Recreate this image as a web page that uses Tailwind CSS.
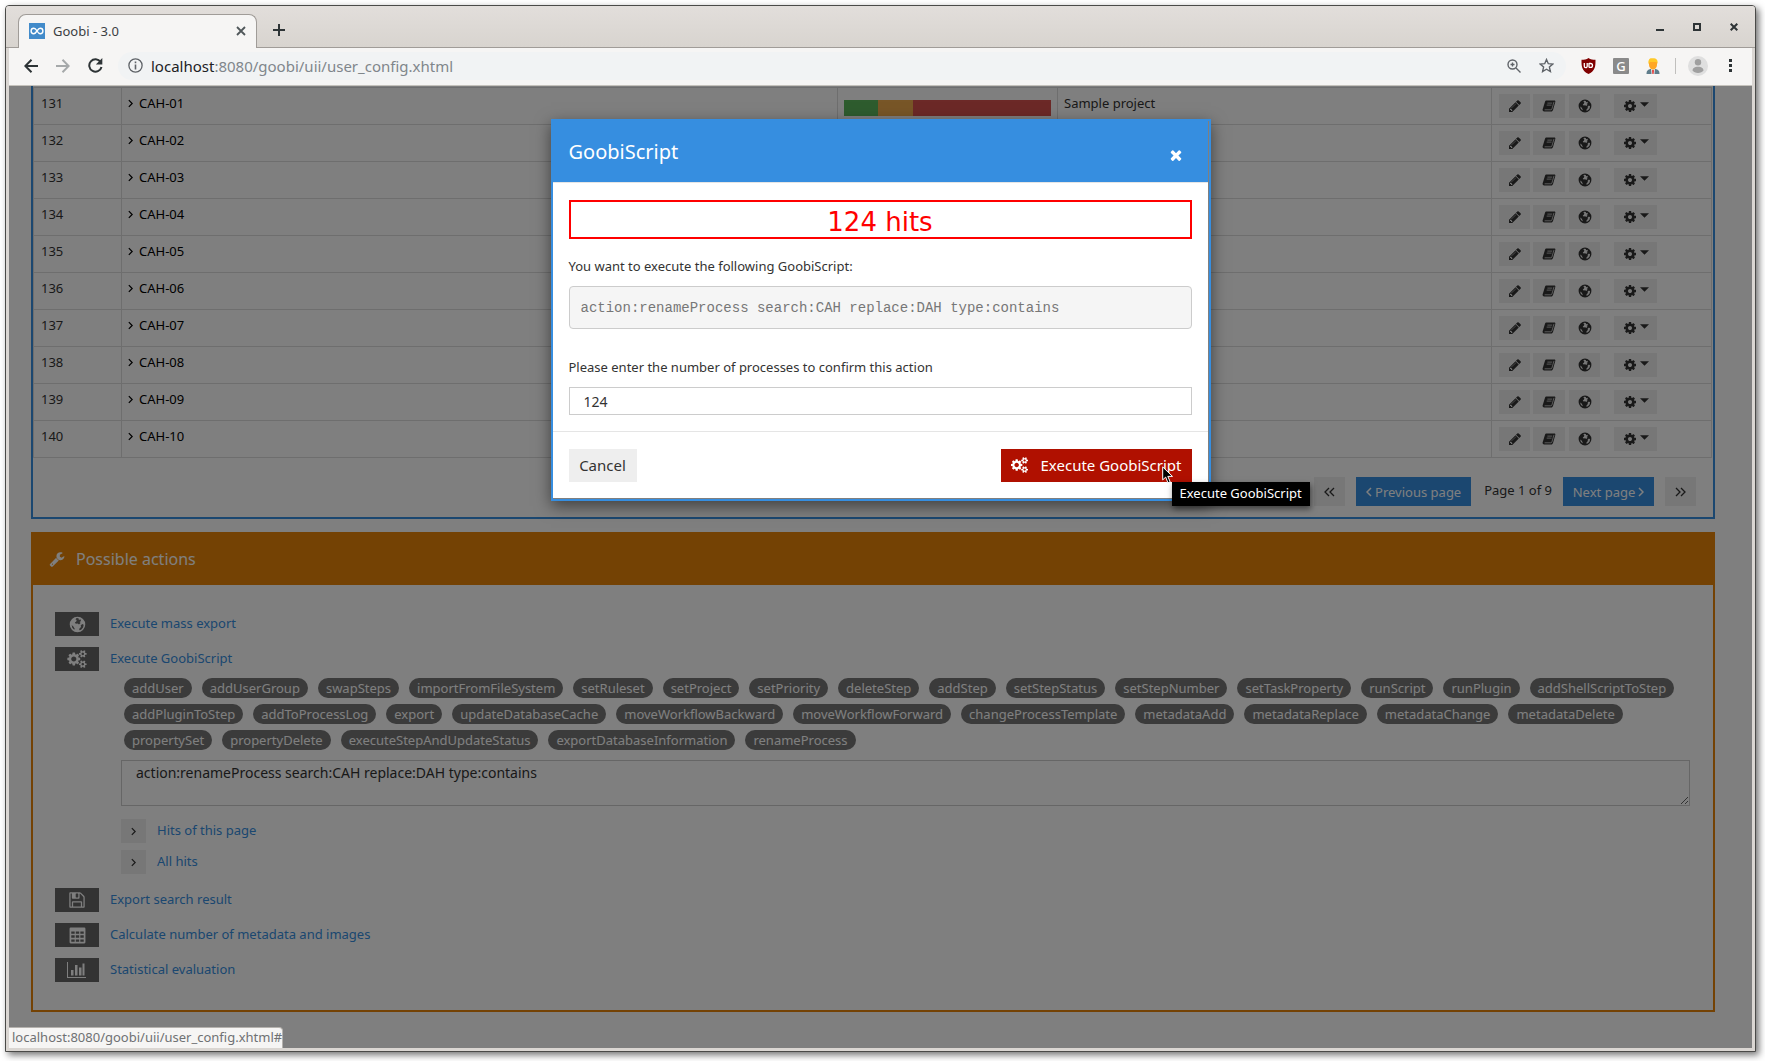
<!DOCTYPE html>
<html lang="en">
<head>
<meta charset="utf-8">
<meta name="viewport" content="width=device-width, initial-scale=1">
<title>Goobi - 3.0</title>
<script src="https://cdn.jsdelivr.net/npm/@tailwindcss/browser@4"></script>
</head>
<body class="bg-white h-screen overflow-hidden pt-[5px] pl-[5px] pr-[9px] pb-[9px] font-['Noto_Sans',sans-serif] text-[13px] leading-5 text-[#333]">

<svg class="hidden" aria-hidden="true">
  <symbol id="pencil" viewBox="0 0 1792 1792"><path d="M491 1536l91-91-235-235-91 91v107h128v128h107zm523-928q0-22-22-22-10 0-17 7l-542 542q-7 7-7 17 0 22 22 22 10 0 17-7l542-542q7-7 7-17zm-54-192l416 416-832 832h-416v-416zm683 96q0 53-37 90l-166 166-416-416 166-165q36-38 90-38 53 0 91 38l235 234q37 39 37 91z"/></symbol>
  <symbol id="cog" viewBox="0 0 1792 1792"><path d="M1152 896q0-106-75-181t-181-75-181 75-75 181 75 181 181 75 181-75 75-181zm512-109v222q0 12-8 23t-20 13l-185 28q-19 54-39 91 35 50 107 138 10 12 10 25t-9 23q-27 37-99 108t-94 71q-12 0-26-9l-138-108q-44 23-91 38-16 136-29 186-7 28-36 28h-222q-14 0-24.500-8.500t-11.500-21.500l-28-184q-49-16-90-37l-141 107q-10 9-25 9-14 0-25-11-126-114-165-168-7-10-7-23 0-12 8-23 15-21 51-66.500t54-70.500q-27-50-41-99l-183-27q-13-2-21-12.500t-8-23.500v-222q0-12 8-23t19-13l186-28q14-46 39-92-40-57-107-138-10-12-10-24 0-10 9-23 26-36 98.500-107.500t94.500-71.500q13 0 26 10l138 107q44-23 91-38 16-136 29-186 7-28 36-28h222q14 0 24.500 8.500t11.500 21.500l28 184q49 16 90 37l142-107q9-9 24-9 13 0 25 10 129 119 165 170 7 8 7 22 0 12-8 23-15 21-51 66.500t-54 70.500q26 50 41 98l183 28q13 2 21 12.500t8 23.500z"/></symbol>
  <symbol id="cogs" viewBox="0 0 1920 1792"><path d="M896 896q0-106-75-181t-181-75-181 75-75 181 75 181 181 75 181-75 75-181zm768 512q0-52-38-90t-90-38-90 38-38 90q0 53 37.500 90.500t90.500 37.500 90.500-37.500 37.500-90.500zm0-1024q0-52-38-90t-90-38-90 38-38 90q0 53 37.500 90.500t90.500 37.500 90.500-37.500 37.500-90.500zm-384 421v185q0 10-7 19.500t-16 10.500l-155 24q-11 35-32 76 34 48 90 115 7 11 7 20 0 12-7 19-23 30-82.500 89.500t-78.500 59.500q-11 0-21-7l-115-90q-37 19-77 31-11 108-23 155-7 24-30 24h-186q-11 0-20-7.500t-10-17.500l-23-153q-34-10-75-31l-118 89q-7 7-20 7-11 0-21-8-144-133-144-160 0-9 7-19 10-14 41-53t47-61q-23-44-35-82l-152-24q-10-1-17-9.500t-7-19.500v-185q0-10 7-19.500t16-10.500l155-24q11-35 32-76-34-48-90-115-7-11-7-20 0-12 7-20 22-30 82-89t79-59q11 0 21 7l115 90q34-18 77-32 11-108 23-154 7-24 30-24h186q11 0 20 7.500t10 17.500l23 153q34 10 75 31l118-89q8-7 20-7 11 0 21 8 144 133 144 160 0 8-7 19-12 16-42 54t-45 60q23 48 34 82l152 23q10 2 17 10.500t7 19.500zm640 533v140q0 16-149 31-12 27-30 52 51 113 51 138 0 4-4 7-122 71-124 71-8 0-46-47t-52-68q-20 2-30 2t-30-2q-14 21-52 68t-46 47q-2 0-124-71-4-3-4-7 0-25 51-138-18-25-30-52-149-15-149-31v-140q0-16 149-31 13-29 30-52-51-113-51-138 0-4 4-7 4-2 35-20t59-34 30-16q8 0 46 46.500t52 67.500q20-2 30-2t30 2q51-71 92-112l6-2q4 0 124 70 4 3 4 7 0 25-51 138 17 23 30 52 149 15 149 31zm0-1024v140q0 16-149 31-12 27-30 52 51 113 51 138 0 4-4 7-122 71-124 71-8 0-46-47t-52-68q-20 2-30 2t-30-2q-14 21-52 68t-46 47q-2 0-124-71-4-3-4-7 0-25 51-138-18-25-30-52-149-15-149-31v-140q0-16 149-31 13-29 30-52-51-113-51-138 0-4 4-7 4-2 35-20t59-34 30-16q8 0 46 46.500t52 67.500q20-2 30-2t30 2q51-71 92-112l6-2q4 0 124 70 4 3 4 7 0 25-51 138 17 23 30 52 149 15 149 31z"/></symbol>
  <symbol id="wrench" viewBox="0 0 1792 1792"><path d="M448 1472q0-26-19-45t-45-19-45 19-19 45 19 45 45 19 45-19 19-45zm644-420l-682 682q-37 37-90 37-52 0-91-37l-106-108q-38-36-38-90 0-53 38-91l681-681q39 98 114.500 173.500t173.500 114.500zm634-435q0 39-23 106-47 134-164.500 217.500t-258.500 83.500q-185 0-316.500-131.500t-131.500-316.500 131.500-316.500 316.500-131.500q58 0 121.500 16.500t107.500 46.500q16 11 16 28t-16 28l-293 169v224l193 107q5-3 79-48.500t135.500-81 70.500-35.500q15 0 23.500 10t8.500 25z"/></symbol>
  <symbol id="floppy" viewBox="0 0 1792 1792"><path d="M512 1536h768v-384h-768v384zm896 0h128v-896q0-14-10-38.500t-20-34.500l-281-281q-10-10-34-20t-39-10v416q0 40-28 68t-68 28h-576q-40 0-68-28t-28-68v-416h-128v1280h128v-416q0-40 28-68t68-28h832q40 0 68 28t28 68v416zm-384-928v-320q0-13-9.500-22.500t-22.500-9.500h-192q-13 0-22.500 9.500t-9.500 22.500v320q0 13 9.500 22.500t22.500 9.500h192q13 0 22.500-9.500t9.500-22.500zm640 32v928q0 40-28 68t-68 28h-1344q-40 0-68-28t-28-68v-1344q0-40 28-68t68-28h928q40 0 88 20t76 48l280 280q28 28 48 76t20 88z"/></symbol>
  <symbol id="times" viewBox="0 0 1792 1792"><path d="M1490 1322q0 40-28 68l-136 136q-28 28-68 28t-68-28l-294-294-294 294q-28 28-68 28t-68-28l-136-136q-28-28-28-68t28-68l294-294-294-294q-28-28-28-68t28-68l136-136q28-28 68-28t68 28l294 294 294-294q28-28 68-28t68 28l136 136q28 28 28 68t-28 68l-294 294 294 294q28 28 28 68z"/></symbol>
  <symbol id="globe" viewBox="0 0 14 14"><path fill-rule="evenodd" d="M7 .6A6.400 6.400 0 1 1 7 13.400 6.400 6.400 0 0 1 7 .6ZM6.300 1.700 5.300 2.600 6.300 3.300 6 4.600 4.800 5.400 5.600 6.400 7.200 6.200 8.200 7.100 9.600 5.800 8.700 4.900 9.900 4.100 9.400 2.700 8.200 3.200 7.800 1.900ZM10.900 6.600 9.600 7.800 9.900 9 8.600 10.300 8.400 11.700 10 11.300 11.600 9.400 12.100 7.300ZM2.200 7.400 2.700 9.600 4.300 11.300 4.700 10.400 3.600 8.600Z"/></symbol>
  <symbol id="book" viewBox="0 0 14 14"><path d="M4.600 1.500h7.700c.9 0 1.300.7 1 1.500L11 11c-.2.900-1 1.500-1.800 1.500H2.100C1.100 12.500.4 11.500.6 10.600L3 2.700c.2-.8.800-1.200 1.600-1.200Z"/><path d="M5.400 4.100h4.800M4.700 6.100h4.800M2.600 10.800h6.300c.5 0 .8-.3 1-.8L12 2.900" fill="none" stroke="#eee" stroke-width=".7"/></symbol>
  <symbol id="grid" viewBox="0 0 15 15"><path fill-rule="evenodd" d="M1.500.5h12a1 1 0 0 1 1 1v12a1 1 0 0 1-1 1h-12a1 1 0 0 1-1-1v-12a1 1 0 0 1 1-1ZM2 4v2h3V4ZM6 4v2h3V4Zm4 0v2h3V4ZM2 7.300v2.200h3V7.300Zm4 0v2.200h3V7.300Zm4 0v2.200h3V7.300ZM2 11v2h3v-2Zm4 0v2h3v-2Zm4 0v2h3v-2Z"/></symbol>
  <symbol id="bars" viewBox="0 0 20 16"><path d="M1 0v15h18v1H0V0ZM4 8h2.500v5.500H4ZM8 3h2.500v10.500H8ZM12 5.500h2.500v8H12ZM15.500 1.500h2v12h-2Z"/></symbol>
  <symbol id="angle" viewBox="0 0 6 10"><path d="M1 1l4 4-4 4" fill="none" stroke="currentColor" stroke-width="1.500"/></symbol>
  <symbol id="angle2" viewBox="0 0 11 10"><path d="M1 1l4 4-4 4M6 1l4 4-4 4" fill="none" stroke="currentColor" stroke-width="1.300"/></symbol>
</svg>

<div class="h-full flex flex-col border border-[#4a4a48] rounded-t-[4px] bg-[#dad6d2] shadow-[3px_3px_7px_rgba(0,0,0,0.55)] overflow-hidden">

  <!-- tab strip -->
  <header class="h-[42px] shrink-0 flex items-end bg-linear-to-b from-[#e2dedb] to-[#d8d4cf] border-b border-[#a09c98] pl-3">
    <div class="relative z-10 h-[34px] w-[239px] -mb-px rounded-t-lg border border-b-0 border-[#a09c98] bg-[#f6f5f4] flex items-center px-[10px] pb-[2px]">
      <svg class="size-4" viewBox="0 0 16 16"><path fill="#428bca" d="M0 0h16v16H0z"/><path d="M8 8C6.500 5.500 5.500 5.300 4.800 5.300a2.700 2.700 0 0 0 0 5.400C6 10.700 7 9.500 8 8s2-2.700 3.200-2.700a2.700 2.700 0 0 1 0 5.400C10 10.700 9 9.600 8 8Z" fill="none" stroke="#fff" stroke-width="1.400"/></svg>
      <span class="ml-2 grow text-[#3b4043]">Goobi - 3.0</span>
      <button aria-label="Close tab"><svg class="size-[10px]" viewBox="0 0 10 10"><path d="M1 1l8 8M9 1l-8 8" stroke="#50575a" stroke-width="1.800"/></svg></button>
    </div>
    <button aria-label="New tab" class="ml-4 mb-[11px]"><svg class="size-3" viewBox="0 0 12 12"><path d="M5 0h2v5h5v2H7v5H5V7H0V5h5z" fill="#2e3436"/></svg></button>
    <div class="ml-auto mr-[17px] mb-4 flex items-end gap-[29px] text-[#2e3436]">
      <button aria-label="Minimize"><svg class="size-2" viewBox="0 0 8 8"><path d="M0 6h8v2H0z" fill="currentColor"/></svg></button>
      <button aria-label="Maximize"><svg class="size-2" viewBox="0 0 8 8"><path d="M1 1h6v6H1z" fill="none" stroke="currentColor" stroke-width="2"/></svg></button>
      <button aria-label="Close window"><svg class="size-2" viewBox="0 0 8 8"><path d="M.7.7l6.600 6.600M7.300.7L.7 7.300" stroke="currentColor" stroke-width="2"/></svg></button>
    </div>
  </header>

  <!-- toolbar -->
  <nav class="mx-[3px] h-[38px] shrink-0 flex items-center bg-[#f6f5f4] border-b border-[#c5c2bc] pl-[15px] pr-5 pb-[2px]">
    <button aria-label="Back"><svg class="size-[14px]" viewBox="0 0 14 14"><path d="M7.500.7L1.300 7l6.200 6.300M1.300 7H14" fill="none" stroke="#2e3436" stroke-width="2"/></svg></button>
    <button aria-label="Forward" class="ml-[18px]"><svg class="size-[14px]" viewBox="0 0 14 14"><path d="M6.500.7L12.700 7l-6.200 6.300M12.700 7H0" fill="none" stroke="#a6a9aa" stroke-width="2"/></svg></button>
    <button aria-label="Reload" class="ml-[18px]"><svg class="size-[15px]" viewBox="0 0 15 15"><path d="M12.600 4A6.200 6.200 0 1 0 13.500 9" fill="none" stroke="#2e3436" stroke-width="2"/><path d="M14.300 0v6.500H7.800Z" fill="#2e3436"/></svg></button>
    <div class="ml-[15px] grow h-7 rounded-full bg-[#f1f3f4] flex items-center pl-[10px] pr-3">
      <svg class="size-[15px]" viewBox="0 0 15 15"><circle cx="7.500" cy="7.500" r="6.600" fill="none" stroke="#5f6368" stroke-width="1.300"/><path d="M6.700 6.500h1.600v5H6.700zM6.700 3.500h1.600v1.700H6.700z" fill="#5f6368"/></svg>
      <div class="ml-2 grow text-[15px] text-[#80868b]"><span class="text-[#202124]">localhost</span>:8080/goobi/uii/user_config.xhtml</div>
      <svg class="size-[14px]" viewBox="0 0 14 14" fill="none" stroke="#5f6368" stroke-width="1.400"><circle cx="5.500" cy="5.500" r="4.500"/><path d="M9 9l4.500 4.500M3.500 5.500h4M5.500 3.500v4"/></svg>
      <svg class="ml-[18px] size-[15px]" viewBox="0 0 15 15"><path d="M7.500 1.500l1.800 4.200 4.500.4-3.400 3 1 4.400-3.900-2.300-3.900 2.300 1-4.400-3.400-3 4.500-.4Z" fill="none" stroke="#5f6368" stroke-width="1.400"/></svg>
    </div>
    <svg class="ml-[15px] w-[15px] h-4" viewBox="0 0 15 16"><path d="M7.500 0c2 1.500 4.500 1.800 7 1.800 0 5.700.2 11-7 14.200C.3 12.800.5 7.500.5 1.800c2.500 0 5-.3 7-1.800Z" fill="#800000"/><path d="M3.300 5v3.200a1.300 1.300 0 0 0 2.900 0V5M8 5v4.500M8 5.500h1.600a1.900 1.900 0 0 1 0 3.800H8" fill="none" stroke="#fff" stroke-width="1.300"/></svg>
    <span class="ml-[17px] size-4 rounded-[1px] bg-[#8a8a8a] text-white text-[13px] leading-4 font-medium text-center">G</span>
    <svg class="ml-4 size-4" viewBox="0 0 16 16"><path d="M1.500 16c0-3.500 1.500-4.500 4-5h5c2.500.5 4 1.500 4 5Z" fill="#607d8b"/><path d="M6 10.500h4l-.5 5.500h-3Z" fill="#e8eef0"/><path d="M8 11.500l1 1-.4 3.500H7.400L7 12.500Z" fill="#e53935"/><path d="M4 3.500h8V7c0 2.500-2 4.500-4 4.500S4 9.500 4 7Z" fill="#ffa726"/><path d="M3.500 6c-.5-4 1-5.700 3-5.700C9 .3 13.500 0 12.500 6L11.500 4H5Z" fill="#ffc928"/></svg>
    <span class="ml-[14px] w-px h-4 bg-[#c0bfbd]"></span>
    <svg class="ml-3 size-5" viewBox="0 0 20 20"><circle cx="10" cy="10" r="10" fill="#dfdfdf"/><circle cx="10" cy="6.200" r="3.200" fill="#a0a0a0"/><path d="M4.500 14.500c0-2.600 2.500-3.800 5.500-3.800s5.500 1.200 5.500 3.800c-1.200 1.600-3 2.500-5.500 2.500s-4.300-.9-5.500-2.500Z" fill="#a0a0a0"/></svg>
    <button aria-label="Menu" class="ml-[21px]"><svg class="w-[3px] h-[13px]" viewBox="0 0 3 13" fill="#2e3436"><path d="M0 0h3v3H0zM0 5h3v3H0zM0 10h3v3H0z"/></svg></button>
  </nav>

  <!-- page viewport -->
  <main class="relative mx-[3px] mb-[3px] grow min-h-0 overflow-hidden bg-white">
    <div class="px-[22px] pr-[37px]">

      <!-- process list -->
      <section class="border-2 border-t-0 border-[#368ee0] pt-px pr-px pb-[11px]">
        <table class="w-full table-fixed border-collapse text-left [&_td]:border [&_td]:border-[#ddd]">
          <colgroup><col class="w-[88px]"><col><col class="w-[220px]"><col class="w-[434px]"><col class="w-[220px]"></colgroup>
          <tbody id="rows"></tbody>
        </table>
        <div class="mt-[19px] mr-4 flex items-center justify-end">
          <button aria-label="First page" class="w-[31px] h-[29px] bg-[#eee] flex items-center justify-center"><svg class="w-[11px] h-[10px] rotate-180"><use href="#angle2"/></svg></button>
          <button class="ml-[11px] w-[115px] h-[29px] bg-[#368ee0] text-white flex items-center justify-center gap-[3px]"><svg class="w-[6px] h-[10px] rotate-180"><use href="#angle"/></svg>Previous page</button>
          <span class="ml-[13px] -mt-1">Page 1 of 9</span>
          <button class="ml-[11px] w-[91px] h-[29px] bg-[#368ee0] text-white flex items-center justify-center gap-[3px]">Next page<svg class="w-[6px] h-[10px]"><use href="#angle"/></svg></button>
          <button aria-label="Last page" class="ml-[11px] w-[31px] h-[29px] bg-[#eee] flex items-center justify-center"><svg class="w-[11px] h-[10px]"><use href="#angle2"/></svg></button>
        </div>
      </section>

      <!-- possible actions -->
      <section class="mt-[13px] border-2 border-[#e88508]">
        <h2 class="h-[51px] bg-[#e88508] text-white text-[16px] flex items-center gap-[11px] pl-4 pb-px"><svg class="size-4 fill-current"><use href="#wrench"/></svg>Possible actions</h2>
        <div class="pt-[27px] pb-7 pl-[22px] pr-[23px] text-[#368ee0] [&_a]:pb-[2px]">
          <div class="flex items-center gap-[11px]"><button aria-label="Execute mass export" class="w-11 h-6 bg-[#666] text-white flex items-center justify-center"><svg class="size-[17px] fill-current"><use href="#globe"/></svg></button><a href="#">Execute mass export</a></div>
          <div class="mt-[11px] flex items-center gap-[11px]"><button aria-label="Execute GoobiScript" class="w-11 h-6 bg-[#666] text-white flex items-center justify-center"><svg class="w-[20px] h-[18px] fill-current"><use href="#cogs"/></svg></button><a href="#">Execute GoobiScript</a></div>
          <div class="ml-[66px] pt-[7px]">
            <div id="pills" class="flex flex-wrap gap-x-[10px] gap-y-[6px] pl-[3px]"></div>
            <textarea aria-label="GoobiScript" class="mt-[10px] block w-full h-[46px] border border-[#ccc] bg-white px-[14px] py-[2px] text-[14px] leading-5 text-[#333] resize">action:renameProcess search:CAH replace:DAH type:contains</textarea>
            <div class="mt-[13px] flex items-center gap-[11px]"><button aria-label="Expand hits of this page" class="w-[25px] h-6 bg-[#eee] text-[#333] flex items-center justify-center"><svg class="w-[5px] h-[9px]"><use href="#angle"/></svg></button><a href="#">Hits of this page</a></div>
            <div class="mt-[7px] flex items-center gap-[11px]"><button aria-label="Expand all hits" class="w-[25px] h-6 bg-[#eee] text-[#333] flex items-center justify-center"><svg class="w-[5px] h-[9px]"><use href="#angle"/></svg></button><a href="#">All hits</a></div>
          </div>
          <div class="mt-[14px] flex items-center gap-[11px]"><button aria-label="Export search result" class="w-11 h-6 bg-[#666] text-white flex items-center justify-center"><svg class="size-[18px] fill-current"><use href="#floppy"/></svg></button><a href="#">Export search result</a></div>
          <div class="mt-[11px] flex items-center gap-[11px]"><button aria-label="Calculate" class="w-11 h-6 bg-[#666] text-white flex items-center justify-center"><svg class="size-[17px] fill-current"><use href="#grid"/></svg></button><a href="#">Calculate number of metadata and images</a></div>
          <div class="mt-[11px] flex items-center gap-[11px]"><button aria-label="Statistical evaluation" class="w-11 h-6 bg-[#666] text-white flex items-center justify-center"><svg class="w-5 h-4 fill-current"><use href="#bars"/></svg></button><a href="#">Statistical evaluation</a></div>
        </div>
      </section>
    </div>

    <!-- modal layer -->
    <div class="absolute inset-0 bg-black/50 flex justify-center items-start pt-[33px]">
      <div role="dialog" aria-labelledby="dlg" class="w-[660px] border-2 border-[#368ee0] shadow-[0_5px_15px_rgba(0,0,0,0.5)]">
        <div class="border-r border-b border-[#7f7f7f] bg-white">
          <div class="h-[62px] bg-[#368ee0] border-b border-[#e5e5e5] flex items-center justify-between pl-4 pr-6 text-white">
            <h1 id="dlg" class="text-[20px]">GoobiScript</h1>
            <button aria-label="Close" class="mt-[6px]"><svg class="size-4 fill-current"><use href="#times"/></svg></button>
          </div>
          <div class="pt-[17px] px-4 pb-4">
            <div class="h-[39px] border-2 border-[#f00] text-[#f00] text-center text-[26px] leading-10 font-['DejaVu_Sans',sans-serif]">124 hits</div>
            <p class="mt-[17px]">You want to execute the following GoobiScript:</p>
            <pre class="mt-[10px] rounded border border-[#ccc] bg-[#f5f5f5] px-[11px] pt-3 pb-[10px] font-['Liberation_Mono',monospace] text-[14px] leading-[19px] text-[#777]">action:renameProcess search:CAH replace:DAH type:contains</pre>
            <label for="n" class="mt-7 block">Please enter the number of processes to confirm this action</label>
            <input id="n" type="text" value="124" class="mt-[10px] block w-full h-7 border border-[#ccc] px-[14px] text-[14px]">
          </div>
          <div class="border-t border-[#e5e5e5] pt-[17px] px-4 pb-4 flex justify-between text-[15px]">
            <button class="h-[33px] w-[68px] bg-[#eee] pb-[2px]">Cancel</button>
            <div class="relative">
              <button class="h-[33px] w-[191px] bg-[#b01000] text-white flex items-center justify-between px-[10px] pb-[2px]"><svg class="w-[17px] h-4 fill-current"><use href="#cogs"/></svg>Execute GoobiScript</button>
              <svg class="absolute right-[18px] top-[17px] w-3 h-[18px]" viewBox="0 0 12 18"><path d="M.7.900v13l3-2.800 2.200 5.700 2.300-1-2.400-5.400h4.700Z" fill="#000" stroke="#fff" stroke-width="1"/></svg>
              <div role="tooltip" class="absolute left-[171px] top-full h-6 px-2 bg-black text-white text-[13px] leading-[23px] whitespace-nowrap shadow-[1px_3px_6px_rgba(0,0,0,0.5)]">Execute GoobiScript</div>
            </div>
          </div>
        </div>
      </div>
    </div>

    <div class="absolute left-0 bottom-0 h-[21px] border-t border-r border-[#b5b2ae] rounded-tr bg-[#f6f5f4] pl-[3px] leading-[18px] text-[#6f7173]">localhost:8080/goobi/uii/user_config.xhtml#</div>
  </main>
</div>

<script>
  const button = (label, icon, cls) => `<button aria-label="${label}" class="h-6 bg-[#eee] flex items-center justify-center text-[#333] ${cls}"><svg class="size-[14px] fill-current"><use href="#${icon}"/></svg></button>`;
  document.getElementById('rows').innerHTML = Array.from({ length: 10 }, (_, i) => `
    <tr class="h-[37px]">
      <td class="pl-[7px]"><div class="-mt-[6px]">${131 + i}</div></td>
      <td class="pl-[6px] text-black"><div class="-mt-[6px] flex items-center gap-[6px]"><svg class="w-[5px] h-[9px]"><use href="#angle"/></svg>CAH-${String(i + 1).padStart(2, '0')}</div></td>
      <td class="px-[6px]">${i ? '' : '<div class="mt-1 flex h-4"><div class="w-1/6 bg-[#5cb85c]"></div><div class="w-1/6 bg-[#f0ad4e]"></div><div class="grow bg-[#d9534f]"></div></div>'}</td>
      <td class="pl-[6px]">${i ? '' : '<div class="-mt-[6px]">Sample project</div>'}</td>
      <td class="pl-[7px]"><div class="flex">
        ${button('Edit', 'pencil', 'w-[31px]')}${button('Metadata', 'book', 'w-8 ml-[3px]')}${button('Export', 'globe', 'w-[31px] ml-1')}
        <button aria-label="More" class="ml-[14px] w-[43px] h-6 bg-[#eee] text-[#333] flex items-center justify-center gap-[3px]"><svg class="size-[14px] fill-current"><use href="#cog"/></svg><svg class="w-[9px] h-[5px] mb-[3px]" viewBox="0 0 8 4"><path d="M0 0h8L4 4Z" fill="currentColor"/></svg></button>
      </div></td>
    </tr>`).join('');
  document.getElementById('pills').innerHTML = 'addUser addUserGroup swapSteps importFromFileSystem setRuleset setProject setPriority deleteStep addStep setStepStatus setStepNumber setTaskProperty runScript runPlugin addShellScriptToStep addPluginToStep addToProcessLog export updateDatabaseCache moveWorkflowBackward moveWorkflowForward changeProcessTemplate metadataAdd metadataReplace metadataChange metadataDelete propertySet propertyDelete executeStepAndUpdateStatus exportDatabaseInformation renameProcess'
    .split(' ').map(n => `<button class="h-5 px-2 rounded-full bg-[#777] text-white leading-[18px]">${n}</button>`).join('');
</script>
</body>
</html>
